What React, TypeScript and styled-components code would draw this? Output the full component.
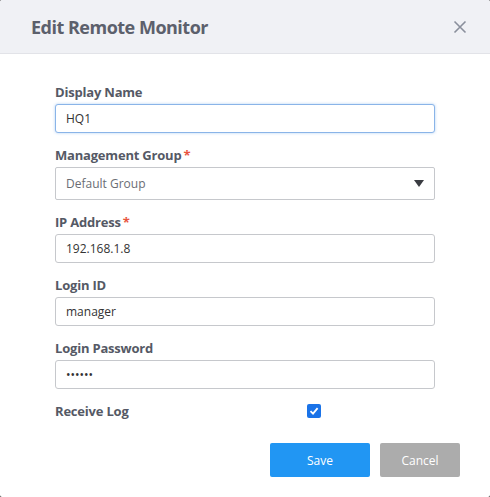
import { FunctionComponent } from "react";
import styled, { createGlobalStyle } from "styled-components";

const GlobalStyle = createGlobalStyle`
  html, body {
    margin: 0;
    padding: 0;
    background: #3a3a3a;
  }
  body {
    font-family: "Open Sans", "Noto Sans", sans-serif;
  }
`

const Dialog = styled.div`
  width: 490px;
  height: 497px;
  background: #fff;
  border-radius: 2px;
  overflow: hidden;
  display: flex;
  flex-direction: column;
`

const Header = styled.div`
  height: 53px;
  background: #f0f1f5;
  border-bottom: 1px solid #e2e3e8;
  display: flex;
  align-items: center;
  justify-content: space-between;
  padding: 0 22px 0 31px;
  box-sizing: content-box;
`

const Title = styled.h2`
  margin: 0;
  font-size: 18px;
  font-weight: 700;
  color: #5c606c;
  letter-spacing: -0.5px;
`

const CloseButton = styled.button`
  border: 0;
  background: none;
  padding: 0;
  width: 16px;
  height: 16px;
  display: flex;
  svg {
    stroke: #8a8f9c;
  }
`

const Body = styled.div`
  padding: 30px 56px 0 55px;
  display: flex;
  flex-direction: column;
`

const Field = styled.div`
  display: flex;
  flex-direction: column;
  margin-bottom: 14px;
`

const Label = styled.label`
  font-size: 13px;
  font-weight: 700;
  color: #555965;
  line-height: 16px;
  margin-bottom: 4px;
  letter-spacing: -0.2px;
`

const Required = styled.span`
  color: #e8553f;
  margin-left: 2px;
`

const Input = styled.input<{ $focused?: boolean }>`
  box-sizing: border-box;
  width: 380px;
  height: 29px;
  border: 1px solid ${({ $focused }) => ($focused ? "#8ab4e8" : "#c6c8cc")};
  border-radius: 3px;
  padding: 0 10px;
  font-family: inherit;
  font-size: 12px;
  color: #333;
  outline: none;
  box-shadow: ${({ $focused }) => ($focused ? "0 0 3px rgba(80, 150, 230, 0.45)" : "none")};
`

const Select = styled.div`
  box-sizing: border-box;
  width: 380px;
  height: 33px;
  border: 1px solid #c6c8cc;
  border-radius: 2px;
  padding: 0 10px;
  display: flex;
  align-items: center;
  justify-content: space-between;
  font-size: 12px;
  color: #6a6d74;
`

const Caret = styled.span`
  width: 0;
  height: 0;
  border-left: 5px solid transparent;
  border-right: 5px solid transparent;
  border-top: 7px solid #3a3c42;
`

const CheckRow = styled.div`
  display: flex;
  align-items: center;
  height: 16px;
`

const CheckLabel = styled.span`
  font-size: 13px;
  font-weight: 700;
  color: #555965;
  width: 252px;
  letter-spacing: -0.2px;
`

const CheckBox = styled.span`
  width: 14px;
  height: 14px;
  border-radius: 2px;
  background: #1a73e8;
  display: flex;
  align-items: center;
  justify-content: center;
`

const Footer = styled.div`
  display: flex;
  justify-content: flex-end;
  gap: 10px;
  padding: 24px 30px 0 0;
`

const Button = styled.button<{ $variant?: "primary" | "muted" }>`
  height: 34px;
  width: ${({ $variant }) => ($variant === "muted" ? 80 : 100)}px;
  border: 0;
  border-radius: 2px;
  background: ${({ $variant }) => ($variant === "muted" ? "#acacac" : "#2196f3")};
  color: #fff;
  font-family: inherit;
  font-size: 12px;
`

const App: FunctionComponent = () => {
  return (
    <>
      <GlobalStyle />
      <Dialog>
        <Header>
          <Title>Edit Remote Monitor</Title>
          <CloseButton aria-label="Close">
            <svg width="16" height="16" viewBox="0 0 16 16" fill="none" strokeWidth="1.6">
              <path d="M2.5 2.5 L13.5 13.5 M13.5 2.5 L2.5 13.5" />
            </svg>
          </CloseButton>
        </Header>
        <Body>
          <Field>
            <Label>Display Name</Label>
            <Input $focused defaultValue="HQ1" />
          </Field>
          <Field>
            <Label>
              Management Group<Required>*</Required>
            </Label>
            <Select>
              Default Group
              <Caret />
            </Select>
          </Field>
          <Field>
            <Label>
              IP Address<Required>*</Required>
            </Label>
            <Input defaultValue="192.168.1.8" />
          </Field>
          <Field>
            <Label>Login ID</Label>
            <Input defaultValue="manager" />
          </Field>
          <Field>
            <Label>Login Password</Label>
            <Input type="password" defaultValue="123456" />
          </Field>
          <CheckRow>
            <CheckLabel>Receive Log</CheckLabel>
            <CheckBox>
              <svg width="10" height="10" viewBox="0 0 10 10" fill="none" stroke="#fff" strokeWidth="1.8">
                <path d="M1.5 5.2 L4 7.6 L8.6 2.2" />
              </svg>
            </CheckBox>
          </CheckRow>
        </Body>
        <Footer>
          <Button $variant="primary">Save</Button>
          <Button $variant="muted">Cancel</Button>
        </Footer>
      </Dialog>
    </>
  )
}

export default App
